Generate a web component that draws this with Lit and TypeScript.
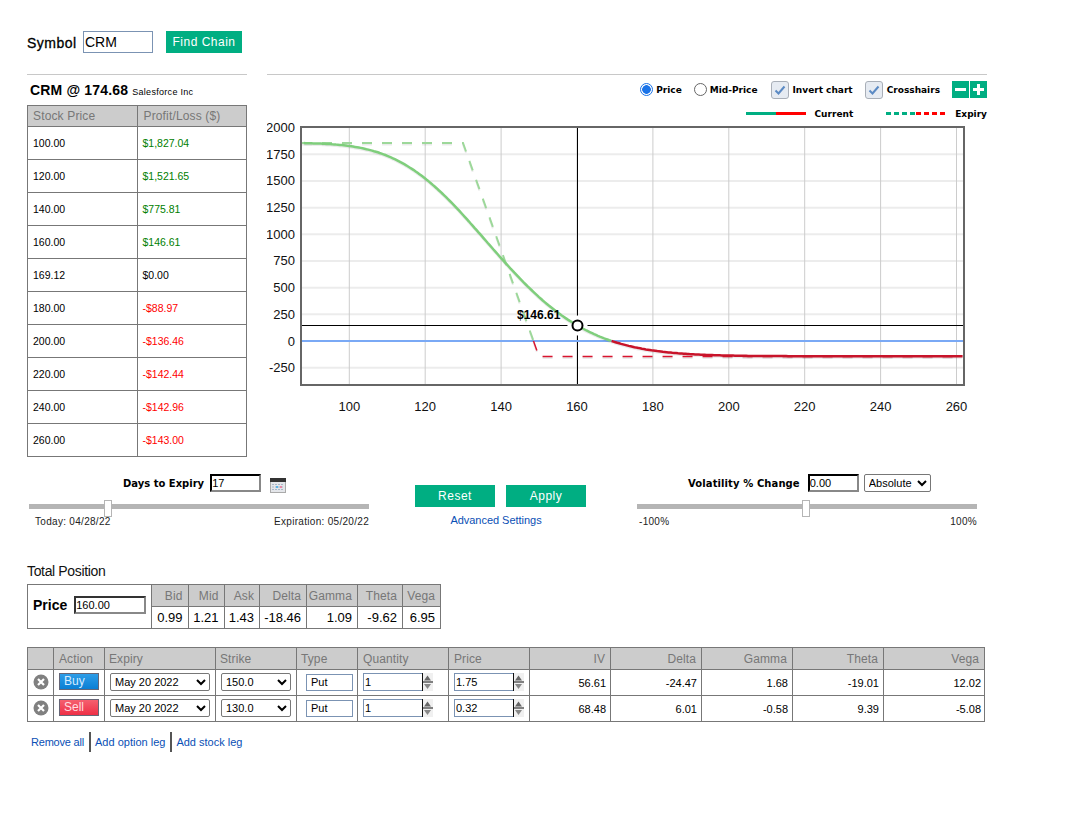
import { LitElement, html, css, svg } from "lit";
import { customElement } from "lit/decorators.js";

const X = (p: number) => 349.3 + (p - 100) * 3.795;
const Y = (v: number) => 341 - v * 0.1067;

function cdf(x: number) {
  const t = 1 / (1 + 0.2316419 * Math.abs(x));
  const d = 0.3989423 * Math.exp((-x * x) / 2);
  const p = d * t * (0.3193815 + t * (-0.3565638 + t * (1.781478 + t * (-1.821256 + t * 1.330274))));
  return x > 0 ? 1 - p : p;
}
function put(S: number, K: number, iv: number) {
  const T = 18 / 365;
  const sd = iv * Math.sqrt(T);
  const d1 = Math.log(S / K) / sd + sd / 2;
  return K * cdf(-(d1 - sd)) - S * cdf(-d1);
}
const pl = (S: number) => 100 * (put(S, 150, 0.5661) - put(S, 130, 0.6848)) - 143;
const line = (a: number, b: number) => {
  const pts: string[] = [];
  for (let p = a; p <= b + 0.001; p += 0.5) pts.push(`${X(p).toFixed(1)},${Y(pl(p)).toFixed(1)}`);
  return pts.join(" ");
};

const rows = [
  ["100.00", "$1,827.04", "g"], ["120.00", "$1,521.65", "g"], ["140.00", "$775.81", "g"], ["160.00", "$146.61", "g"],
  ["169.12", "$0.00", "k"], ["180.00", "-$88.97", "r"], ["200.00", "-$136.46", "r"], ["220.00", "-$142.44", "r"],
  ["240.00", "-$142.96", "r"], ["260.00", "-$143.00", "r"],
];
const legs = [
  { a: "Buy", strike: "150.0", price: "1.75", v: ["56.61", "-24.47", "1.68", "-19.01", "12.02"] },
  { a: "Sell", strike: "130.0", price: "0.32", v: ["68.48", "6.01", "-0.58", "9.39", "-5.08"] },
];

const check = html`<svg class="chk" width="18" height="18" viewBox="0 0 18 18"><rect x=".5" y=".5" width="17" height="17" rx="2.5" fill="#e6ebf2" stroke="#a9afb8"/><path d="M4.5 9.5l3 3 6-7" fill="none" stroke="#5b8ac4" stroke-width="2"/></svg>`;
const spinner = html`<svg class="spin" width="11" height="18" viewBox="0 0 11 18"><rect width="11" height="18" fill="#f0f0f0"/><path d="M.5 0v18M0 9h11" stroke="#111" stroke-width="1"/><path d="M5.500 2.500l3.500 5h-7z" fill="#666"/><path d="M2 11h7l-3.500 5z" fill="#888"/></svg>`;

@customElement("app-root")
export class AppRoot extends LitElement {
  static styles = css`
    :host { display: block; width: 1066px; min-height: 823px; background: #fff; box-sizing: border-box; padding: 31px 0 0 27px; font-family: "Liberation Sans", Arial, sans-serif; font-size: 11px; color: #000; }
    * { box-sizing: border-box; }
    input { font-family: "Liberation Sans", Arial, sans-serif; outline: none; background: #fff; color: #000; padding: 0 1px; }
    a { color: #0a4fb5; text-decoration: none; }
    .btn { border: 0; background: #00ae82; color: #fff; font: 12px "Liberation Sans", Arial, sans-serif; letter-spacing: .5px; display: flex; align-items: center; justify-content: center; height: 22px; padding: 0; }
    .top { display: flex; align-items: center; height: 22px; margin-bottom: 21px; }
    .sym { font-size: 14px; letter-spacing: .5px; -webkit-text-stroke: .3px #000; width: 56px; padding-top: 1px; }
    .symin { width: 70px; height: 22px; border: 1px solid #7b93b3; font-size: 14px; }
    .find { width: 76px; margin-left: 13px; }
    .main { display: flex; gap: 20px; height: 383px; }
    .left { width: 220px; border-top: 1px solid #c8c8c8; }
    .title { height: 30px; display: flex; align-items: center; gap: 4px; padding-left: 3px; font-size: 14px; font-weight: 700; letter-spacing: .17px; }
    .title span { font-size: 9px; font-weight: 400; letter-spacing: .3px; padding-top: 3px; }
    table { border-collapse: collapse; table-layout: fixed; }
    th, td { border: 1px solid #777; padding: 0; font-weight: 400; }
    th { background: #ccc; color: #777; font-size: 12px; }
    .pl { width: 220px; }
    .pl th { height: 21px; text-align: left; padding-left: 5px; letter-spacing: .15px; }
    .pl th + th { padding-left: 6px; }
    .pl td { height: 33px; padding-left: 5px; font-size: 10.5px; }
    .g { color: #008000; } .r { color: #f00; }
    .right { width: 720px; border-top: 1px solid #c8c8c8; }
    .bold { font-family: "DejaVu Sans", Verdana, sans-serif; font-weight: 700; font-size: 9px; }
    .tools { height: 28px; display: flex; justify-content: flex-end; align-items: center; padding-top: 1px; }
    .opt { display: flex; align-items: center; gap: 3px; }
    .radio { width: 13px; height: 13px; border-radius: 50%; border: 1px solid #666; background: #fff; display: block; }
    .radio.on { border: 1.5px solid #1a73e8; background: radial-gradient(circle, #1a73e8 0 4px, #fff 4.6px); }
    .chk { display: block; }
    .mid { margin: 0 1px 0 12px; }
    .ci { margin-left: 12px; gap: 4px; }
    .pm { width: 17px; height: 17px; background: #00ae82; margin-left: 1px; display: block; }
    .pm:first-of-type { margin-left: 12px; }
    .legend { height: 18px; margin-top: 2px; display: flex; justify-content: flex-end; align-items: center; padding-bottom: 1px; }
    .sw { display: block; width: 30px; height: 3px; }
    .sw.gs { background: #00ae82; } .sw.rs { background: #f00; }
    .sw.gd { background: repeating-linear-gradient(90deg, #00ae82 0 5px, transparent 5px 8px); height: 3px; }
    .sw.rd { background: repeating-linear-gradient(90deg, #f00 0 5px, transparent 5px 8px); height: 3px; }
    .lt { margin-left: 9px; }
    .lt2 { margin-right: 33px; }
    .chart { display: block; width: 720px; height: 304px; margin-top: -5px; }
    .chart text { font-family: "Liberation Sans", Arial, sans-serif; font-size: 13px; fill: #111; }
    .chart text.val { font-size: 12px; font-weight: 700; fill: #000; }
    .controls { display: flex; margin: 17px 0 0 2px; height: 53px; }
    .blk { width: 340px; }
    .head { height: 18px; display: flex; align-items: center; }
    .head .bold { font-size: 10px; }
    .h1 { padding-left: 94px; gap: 6px; }
    .h2 { padding-left: 51px; }
    .h2 .bold { letter-spacing: .1px; }
    .box { height: 18px; width: 51px; border: 2px inset #555; border-color: #333 #888 #888 #333; font-size: 11px; padding: 0; }
    .cal { margin: 4px 0 0 3px; display: block; }
    .track { position: relative; height: 5px; background: #b5b5b5; margin-top: 12px; }
    .thumb { position: absolute; top: -4px; width: 8px; height: 17px; background: #fff; border: 1px solid #b5b5b5; }
    .t1 { left: 75px; } .t2 { left: 165px; }
    .scale { display: flex; justify-content: space-between; font-size: 10px; letter-spacing: .3px; margin-top: 7px; padding: 0 0 0 6px; color: #222; }
    .scale.s { padding: 0 0 0 2px; }
    .ctr { width: 171px; margin: 11px 51px 0 46px; }
    .ctr .btns { display: flex; gap: 11px; }
    .ctr .btn { width: 80px; }
    .adv { display: block; text-align: center; margin-top: 7px; padding-right: 9px; font-size: 11px; letter-spacing: -.03px; }
    .volbox { margin-left: 8px; }
    .volsel { margin-left: 5px; width: 67px; height: 18px; font: 11px "Liberation Sans", Arial, sans-serif; background: #fff; border: 1px solid #777; border-radius: 2px; padding: 0; }
    .tp { font-size: 14px; height: 16px; line-height: 16px; margin-top: 36px; letter-spacing: -.35px; color: #111; }
    .tot { margin-top: 5px; width: 414px; }
    .tot th, .tot td { text-align: right; padding: 0 5px 0 0; height: 22px; }
    .tot td { font-size: 13px; }
    .tot th { font-size: 12px; letter-spacing: .1px; }
    .tot td.pb { text-align: left; padding: 0 0 3px 5px; }
    .pb div { display: flex; align-items: center; gap: 7px; font-size: 14px; font-weight: 700; }
    .pb input { width: 72px; height: 18px; border: 2px solid; border-color: #333 #888 #888 #333; font-size: 11px; padding: 0; }
    .cp { width: 124px; } .c1 { width: 36.5px; } .c2 { width: 36px; } .c3 { width: 35.5px; } .c4 { width: 47px; } .c5 { width: 51px; } .c6 { width: 45px; } .c7 { width: 38px; }
    .legs { margin-top: 18px; width: 957px; }
    .legs th { height: 22px; text-align: left; padding-left: 4px; font-size: 12px; letter-spacing: .1px; }
    .legs th:nth-child(2), .legs th:nth-child(6), .legs th:nth-child(7) { padding-left: 5px; }
    .legs th.n { text-align: right; padding: 0 5px 0 0; }
    .legs td { height: 26px; padding: 0 4px 0 5px; font-size: 11px; }
    .legs td.n { text-align: right; padding: 0 4px 0 0; }
    .legs td.n:last-child { padding-right: 3px; }
    .w0 { width: 26px; } .w1 { width: 51px; } .w2 { width: 111px; } .w3 { width: 81px; } .w4 { width: 61px; } .w5 { width: 91px; } .w6 { width: 81px; } .w7 { width: 81px; } .w8 { width: 91px; } .w9 { width: 91px; } .w10 { width: 91px; } .w11 { width: 101px; }
    .rm { display: block; margin: 0 auto 2px; }
    .legs td.ic { padding: 0; }
    .act { width: 40px; height: 17px; display: block; margin-bottom: 2px; border: 1px solid #667; font-size: 12px; line-height: 15px; padding-left: 4px; }
    .Buy { background: linear-gradient(#2d9de8, #0b7fd4); color: #d6ecff; }
    .Sell { background: linear-gradient(#f5606f, #ee2f46); color: #ffdfe2; }
    .sel { height: 18px; margin-bottom: 1px; font: 11px "Liberation Sans", Arial, sans-serif; background: #fff; display: block; border: 1px solid #777; border-radius: 2px; padding: 0; color: #000; }
    .s1 { width: 100px; } .s2 { width: 70px; }
    .ty { width: 47px; height: 17px; margin: 0 0 1px 4px; display: block; border: 1px solid #7b93b3; font-size: 11px; padding: 0 4px; }
    .num { display: flex; height: 18px; margin-bottom: 1px; border: 1px solid #7b93b3; width: 70px; align-items: stretch; }
    .num input { flex: 1; min-width: 0; width: 0; border: 0; height: 16px; font-size: 11px; padding: 0 1px; }
    .spin { display: block; margin-top: -1px; margin-right: -1px; flex: none; }
    .links { display: flex; align-items: center; margin: 10px 0 0 4px; font-size: 11px; height: 20px; }
    .links a:first-child { letter-spacing: -.2px; }
    .sep { width: 2px; height: 20px; background: #555; margin: 0 4px 0 5px; display: block; }
  `;

  private chart() {
    const ys = [1750, 1500, 1250, 1000, 750, 500, 250, -250];
    const lab = [2000, 1750, 1500, 1250, 1000, 750, 500, 250, 0, -250];
    const xs = [100, 120, 140, 160, 180, 200, 220, 240, 260];
    return svg`<svg class="chart" viewBox="267 118 720 304" width="720" height="304">
      ${ys.map((v) => svg`<line x1="301" x2="964" y1=${Y(v)} y2=${Y(v)} stroke="#ececec" stroke-width="2"/>`)}
      ${xs.map((p) => svg`<line y1="127" y2="384" x1=${X(p)} x2=${X(p)} stroke="#ccc" stroke-width="1"/>`)}
      <line x1="301" x2="964" y1="325.500" y2="325.500" stroke="#000"/>
      <line x1="577.500" x2="577.500" y1="127" y2="384" stroke="#000"/>
      <circle cx="577.500" cy="325.500" r="10" fill="#fff"/>
      <line x1="301" x2="964" y1="341" y2="341" stroke="#7aa9f5" stroke-width="2"/>
      <g fill="none" transform="translate(0 1.500)" stroke="#000" stroke-opacity=".08">
        <path d="M302 143H463L533.500 341" stroke-width="2" stroke-dasharray="10 10"/>
        <path d="M533.500 341L539 356.500H962" stroke-width="2" stroke-dasharray="10 10"/>
        <polyline points=${line(88, 261.7)} stroke-width="2"/>
      </g>
      <path d="M302 143H463L533.500 341" fill="none" stroke="#9dd89a" stroke-width="2" stroke-dasharray="10 10"/>
      <path d="M533.500 341L539 356.500H962" fill="none" stroke="#d8152f" stroke-width="1.500" stroke-dasharray="10 10"/>
      <polyline points=${line(88, 169.12)} fill="none" stroke="#7fce7c" stroke-width="2.500"/>
      <polyline points=${line(169.12, 261.7)} fill="none" stroke="#c8142a" stroke-width="2.500"/>
      <circle cx="577.500" cy="325.500" r="5" fill="#fff" stroke="#000" stroke-width="2"/>
      <text class="val" x="517" y="319">$146.61</text>
      <rect x="301" y="127" width="663" height="258" fill="none" stroke="#666" stroke-width="2"/>
      ${lab.map((v) => svg`<text x="295" y=${Y(v) + 4.5} text-anchor="end">${v}</text>`)}
      ${xs.map((p) => svg`<text x=${X(p)} y="411" text-anchor="middle">${p}</text>`)}
    </svg>`;
  }

  render() {
    return html`
      <div class="top">
        <span class="sym">Symbol</span>
        <input class="symin" value="CRM" />
        <button class="btn find">Find Chain</button>
      </div>
      <div class="main">
        <div class="left">
          <div class="title">CRM @ 174.68 <span>Salesforce Inc</span></div>
          <table class="pl">
            <tr><th>Stock Price</th><th>Profit/Loss ($)</th></tr>
            ${rows.map((r) => html`<tr><td>${r[0]}</td><td class=${r[2]}>${r[1]}</td></tr>`)}
          </table>
        </div>
        <div class="right">
          <div class="tools bold">
            <label class="opt"><span class="radio on"></span>Price</label>
            <label class="opt mid"><span class="radio"></span>Mid-Price</label>
            <label class="opt ci">${check}Invert chart</label>
            <label class="opt ci">${check}Crosshairs</label>
            <svg class="pm" viewBox="0 0 17 17"><rect x="3" y="7" width="11" height="3" fill="#fff"/></svg>
            <svg class="pm" viewBox="0 0 17 17"><path d="M3 7h4V3h3v4h4v3h-4v4H7v-4H3z" fill="#fff"/></svg>
          </div>
          <div class="legend bold">
            <span class="sw gs"></span><span class="sw rs"></span><span class="lt lt2">Current</span>
            <span class="sw gd"></span><span class="sw rd"></span><span class="lt">Expiry</span>
          </div>
          ${this.chart()}
        </div>
      </div>
      <div class="controls">
        <div class="blk">
          <div class="head h1">
            <span class="bold">Days to Expiry</span>
            <input class="box" value="17" />
            <svg class="cal" width="16" height="15" viewBox="0 0 16 15"><rect x=".5" y=".5" width="15" height="14" fill="#e4e6ea" stroke="#aaa"/><rect x="0" y="0" width="16" height="4" fill="#333"/><path d="M2 6.500h12M2 9h12M2 11.500h12" stroke="#a8b6c8" stroke-dasharray="2 1"/><rect x="6" y="8" width="2" height="2" fill="#5ab4e8"/><rect x="10" y="8" width="2" height="2" fill="#e88aa8"/></svg>
          </div>
          <div class="track"><span class="thumb t1"></span></div>
          <div class="scale"><span>Today: 04/28/22</span><span>Expiration: 05/20/22</span></div>
        </div>
        <div class="ctr">
          <div class="btns"><button class="btn">Reset</button><button class="btn">Apply</button></div>
          <a class="adv" href="#">Advanced Settings</a>
        </div>
        <div class="blk">
          <div class="head h2">
            <span class="bold">Volatility % Change</span>
            <input class="box volbox" value="0.00" />
            <select class="volsel"><option>Absolute</option></select>
          </div>
          <div class="track"><span class="thumb t2"></span></div>
          <div class="scale s"><span>-100%</span><span>100%</span></div>
        </div>
      </div>
      <div class="tp">Total Position</div>
      <table class="tot">
        <colgroup><col class="cp"/><col class="c1"/><col class="c2"/><col class="c3"/><col class="c4"/><col class="c5"/><col class="c6"/><col class="c7"/></colgroup>
        <tr>
          <td class="pb" rowspan="2"><div>Price <input value="160.00" /></div></td>
          <th>Bid</th><th>Mid</th><th>Ask</th><th>Delta</th><th>Gamma</th><th>Theta</th><th>Vega</th>
        </tr>
        <tr><td>0.99</td><td>1.21</td><td>1.43</td><td>-18.46</td><td>1.09</td><td>-9.62</td><td>6.95</td></tr>
      </table>
      <table class="legs">
        <colgroup>${[0,1,2,3,4,5,6,7,8,9,10,11].map((i) => html`<col class="w${i}"/>`)}</colgroup>
        <tr>
          <th></th><th>Action</th><th>Expiry</th><th>Strike</th><th>Type</th><th>Quantity</th><th>Price</th>
          <th class="n">IV</th><th class="n">Delta</th><th class="n">Gamma</th><th class="n">Theta</th><th class="n">Vega</th>
        </tr>
        ${legs.map((l) => html`<tr>
          <td class="ic"><svg class="rm" width="16" height="16" viewBox="0 0 16 16"><circle cx="8" cy="8" r="7.500" fill="#808080"/><path d="M5 5l6 6M11 5l-6 6" stroke="#fff" stroke-width="2.200"/></svg></td>
          <td><span class="act ${l.a}">${l.a}</span></td>
          <td><select class="sel s1"><option>May 20 2022</option></select></td>
          <td><select class="sel s2"><option>${l.strike}</option></select></td>
          <td><input class="ty" value="Put" /></td>
          <td><div class="num"><input value="1" />${spinner}</div></td>
          <td><div class="num"><input value=${l.price} />${spinner}</div></td>
          ${l.v.map((v) => html`<td class="n">${v}</td>`)}
        </tr>`)}
      </table>
      <div class="links"><a href="#">Remove all</a><span class="sep"></span><a href="#">Add option leg</a><span class="sep"></span><a href="#">Add stock leg</a></div>
    `;
  }
}
